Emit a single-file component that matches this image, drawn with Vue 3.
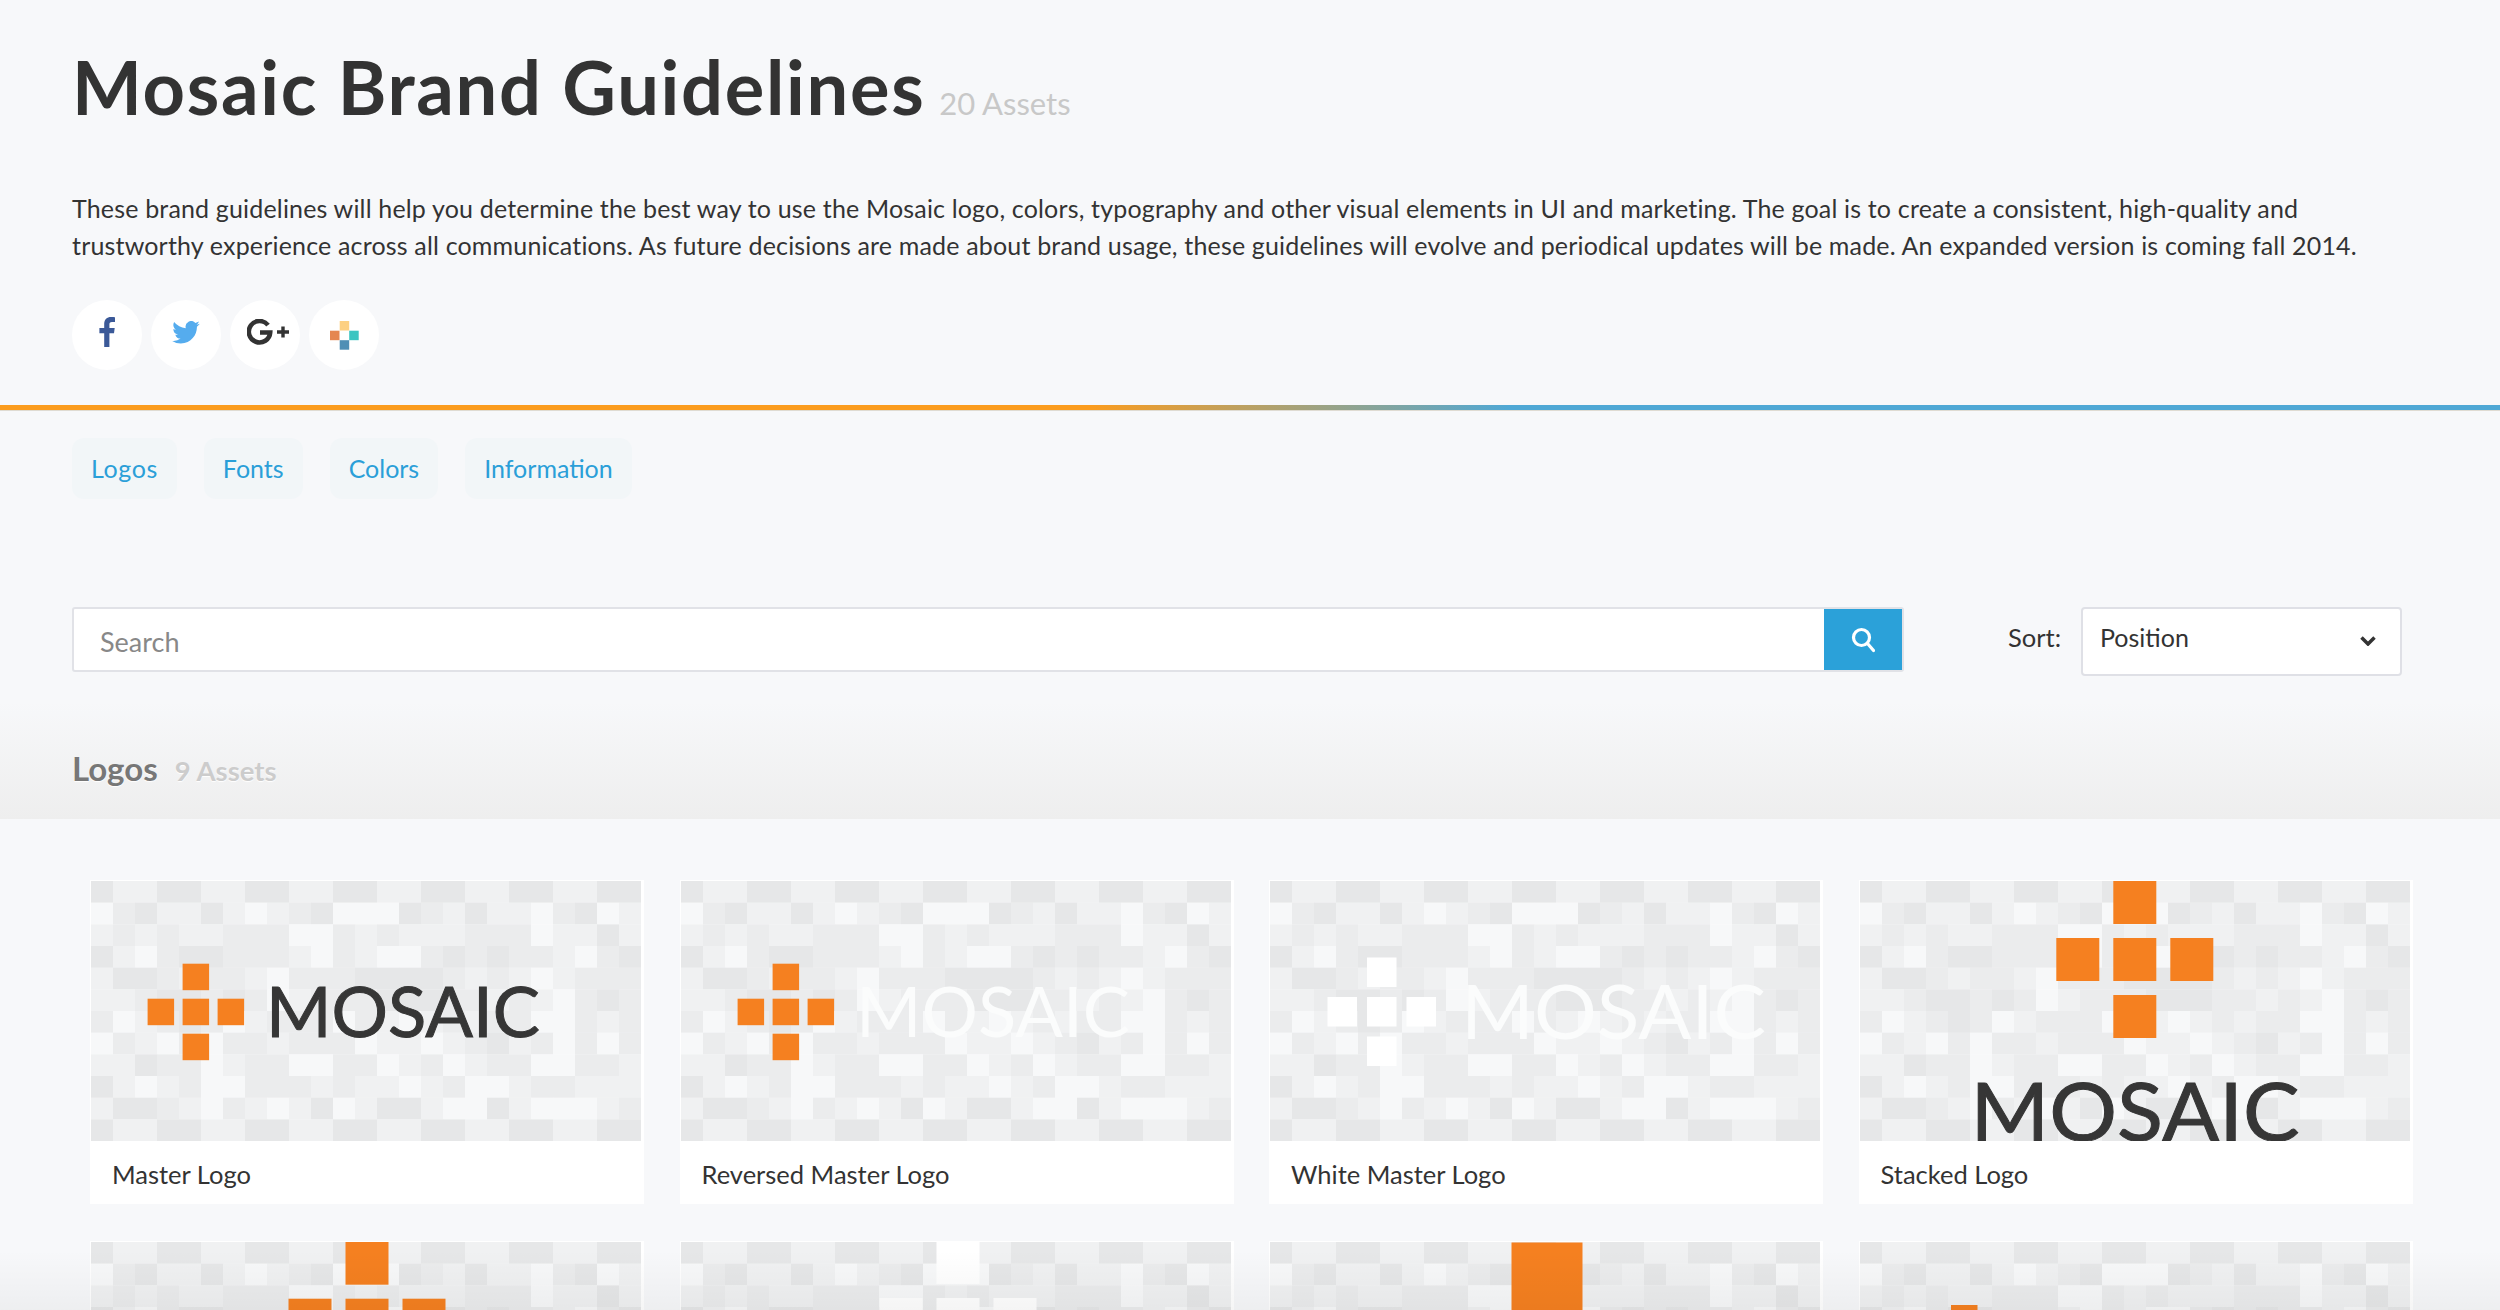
<script setup>
const rows = [
  '0220022002200220022002200',
  '3102202321033301202231032',
  '2121221113312122211132202',
  '0231001112312331010112310',
  '2001211231110000121232111',
  '2210010132111000112123101',
  '1321013211131232121133121',
  '3123131121113223210213131',
  '2201132113311321321133112',
  '0232133111212232133211222',
  '2001231232032002330233321',
  '0220022002200220022002200'
]
const shades = ['#e6e7e8', '#ebeced', '#f0f1f2', '#f7f8f9']
const cells = rows.flatMap((row, r) =>
  row.split('').map((v, c) => ({ x: c * 22, y: r * 21.67, fill: shades[+v] }))
)
const plus = (x, y, s, gap) => [
  [x, y - s - gap],
  [x - s - gap, y],
  [x, y],
  [x + s + gap, y],
  [x, y + s + gap]
].map(([px, py]) => ({ x: px, y: py, s }))

const ORANGE = '#f58020'
const DARK = '#363636'
const WHITE = '#ffffff'
const masterSquares = plus(91.6, 117.7, 26.5, 8.5)
const cards = [
  { id: 1, name: 'Master Logo', squares: masterSquares, color: ORANGE, word: { x: 175, y: 156, size: 69, width: 274, fill: DARK, stroke: DARK } },
  { id: 2, name: 'Reversed Master Logo', squares: masterSquares, color: ORANGE, word: { x: 175, y: 156, size: 69, width: 274, fill: '#fbfcfc', stroke: 'none' } },
  { id: 3, name: 'White Master Logo', squares: plus(97, 116, 29.5, 10), color: WHITE, word: { x: 191, y: 158, size: 76, width: 305, fill: '#fbfcfc', stroke: 'none' } },
  { id: 4, name: 'Stacked Logo', squares: plus(253.3, 57, 43, 14), color: ORANGE, word: { x: 110.6, y: 260, size: 82, width: 329, fill: DARK, stroke: DARK } },
  { id: 5, squares: plus(254.5, 56.7, 43, 14), color: ORANGE },
  { id: 6, squares: plus(255.5, 56, 43, 14), color: WHITE },
  { id: 7, squares: plus(241.5, 94.5, 71, 23), color: ORANGE },
  { id: 8, squares: plus(91, 98, 26.5, 8.5), color: ORANGE }
]
</script>

<template>
  <div class="page">
    <header class="head">
      <h1 class="title">Mosaic Brand Guidelines <small class="count">20 Assets</small></h1>
      <p class="intro">These brand guidelines will help you determine the best way to use the Mosaic logo, colors, typography and other visual elements in UI and marketing. The goal is to create a consistent, high-quality and<br>trustworthy experience across all communications. As future decisions are made about brand usage, these guidelines will evolve and periodical updates will be made. An expanded version is coming fall 2014.</p>
      <div class="social">
        <a class="circle">
          <svg class="up" width="16" height="30" viewBox="0 0 16 30"><path fill="#3b5998" d="M10.4 30V16.3h4.6l.7-5.4h-5.3V7.5c0-1.5.4-2.6 2.6-2.6H16V.2C15.5.1 13.9 0 12 0 8 0 5.2 2.5 5.2 7v3.900H.4v5.400h4.800V30z"/></svg>
        </a>
        <a class="circle">
          <svg class="up" width="28" height="23" viewBox="0 0 24 20"><path fill="#55acee" d="M24 2.400a9.800 9.800 0 0 1-2.800.8A4.900 4.900 0 0 0 23.300.5a9.800 9.800 0 0 1-3.100 1.200A4.900 4.900 0 0 0 11.800 6.200 14 14 0 0 1 1.700.9a4.900 4.900 0 0 0 1.500 6.600 4.900 4.900 0 0 1-2.200-.6v.1a4.900 4.900 0 0 0 3.900 4.800 4.900 4.900 0 0 1-2.200.1 4.900 4.900 0 0 0 4.600 3.400A9.900 9.900 0 0 1 0 17.300 14 14 0 0 0 7.500 19.500c9 0 14-7.500 14-14v-.6A10 10 0 0 0 24 2.400z"/></svg>
        </a>
        <a class="circle gplus">
          <svg class="up" width="42" height="26" viewBox="0 0 42 26"><path fill="none" stroke="#333" stroke-width="4.6" d="M21 6.200A10.700 10.700 0 1 0 23.200 13.500H13"/><path fill="none" stroke="#333" stroke-width="3.4" d="M30 13h12M36 7.500v11"/></svg>
        </a>
        <a class="circle">
          <svg width="29" height="29" viewBox="0 0 29 29"><rect x="9.7" y="0" width="9.5" height="9.5" fill="#fdd082"/><rect x="0" y="9.7" width="9.5" height="9.5" fill="#e58650"/><rect x="19.2" y="9.7" width="9.5" height="9.5" fill="#3cc5c1"/><rect x="9.7" y="19.2" width="9.5" height="9.5" fill="#4f8fb5"/></svg>
        </a>
      </div>
    </header>
    <div class="rule"></div>
    <nav class="tabs">
      <a class="tab">Logos</a>
      <a class="tab">Fonts</a>
      <a class="tab">Colors</a>
      <a class="tab">Information</a>
    </nav>
    <div class="tools">
      <div class="search">
        <div class="search-input">Search</div>
        <button class="search-btn">
          <svg width="24" height="26" viewBox="0 0 24 26"><circle cx="10.5" cy="10.5" r="8" fill="none" stroke="#fff" stroke-width="3.2"/><path d="M16.5 16.5l6 7" stroke="#fff" stroke-width="3.2" stroke-linecap="round"/></svg>
        </button>
      </div>
      <span class="sort-label">Sort:</span>
      <div class="select">
        <span>Position</span>
        <svg width="16" height="10" viewBox="0 0 16 10"><path d="M1.5 1.500L8 8l6.500-6.500" fill="none" stroke="#333" stroke-width="3.5"/></svg>
      </div>
    </div>
    <section class="band">
      <h2 class="band-title">Logos <small class="band-count">9 Assets</small></h2>
    </section>
    <div class="grid">
      <article v-for="card in cards" :key="card.id" class="card">
        <svg class="art" viewBox="0 0 550 260" width="550" height="260">
          <rect v-for="(cell, i) in cells" :key="i" :x="cell.x" :y="cell.y" width="22.2" height="21.87" :fill="cell.fill"/>
          <rect v-for="(sq, i) in card.squares" :key="'s' + i" :x="sq.x" :y="sq.y" :width="sq.s" :height="sq.s" :fill="card.color"/>
          <text v-if="card.word" :x="card.word.x" :y="card.word.y" :font-size="card.word.size" :fill="card.word.fill" :stroke="card.word.stroke" stroke-width="1" :textLength="card.word.width" lengthAdjust="spacingAndGlyphs" class="word">MOSAIC</text>
        </svg>
        <div v-if="card.name" class="label">{{ card.name }}</div>
      </article>
    </div>
    <div class="fade"></div>
  </div>
</template>

<style>
html, body { margin: 0; background: #f7f8fa; }
</style>

<style scoped>
.page {
  position: relative;
  width: 2500px;
  height: 1310px;
  overflow: hidden;
  background: #f7f8fa;
  font-family: Lato, "Open Sans", sans-serif;
  color: #333;
}
.head { padding: 39px 72px 0; height: 365px; box-sizing: border-box; }
.title {
  margin: 0;
  font-size: 74px;
  line-height: 96px;
  font-weight: 700;
  letter-spacing: 1.7px;
  color: #333;
}
.count { font-size: 31px; font-weight: 400; letter-spacing: 0; color: #c8c8c8; margin-left: -6px; }
.intro { margin: 39px 0 0; font-size: 25px; line-height: 37px; letter-spacing: .17px; color: #333; }
.social { display: flex; gap: 9px; margin-top: 36px; }
.circle {
  width: 70px; height: 70px; border-radius: 50%; background: #fff;
  display: flex; align-items: center; justify-content: center;
}
.up { margin-bottom: 6px; }
.gplus svg { margin-left: 5px; }
.rule {
  height: 5px;
  background: linear-gradient(90deg, #fb9c1e 0, #fb9c1e 1090px, #4fa8d5 1510px, #4fa8d5 100%);
  box-shadow: 0 1px 0 rgba(200, 190, 170, .5);
  margin-top: 40px;
}
.tabs { display: flex; gap: 27px; padding: 28px 72px 0; }
.tab {
  height: 61px; line-height: 61px; padding: 0 19px; border-radius: 12px;
  background: #f2f6f8; color: #2b9fd8; font-size: 25px;
}
.tab:first-child { letter-spacing: .6px; }
.tools { display: flex; align-items: flex-start; padding: 108px 72px 0; }
.search {
  width: 1832px; height: 65px; box-sizing: border-box; display: flex;
  border: 2px solid #e1e2e7; border-radius: 3px; background: #fff;
}
.search-input { flex: 1; padding-left: 26px; font-size: 27px; line-height: 66px; color: #888; }
.search-btn {
  width: 78px; border: 0; padding: 0; background: #2ba1d9;
  display: flex; align-items: center; justify-content: center;
}
.sort-label { margin-left: 104px; font-size: 25.5px; line-height: 60px; color: #333; }
.select {
  margin-left: 20px; width: 321px; height: 69px; box-sizing: border-box;
  border: 2px solid #dfe0e6; border-radius: 4px; background: #fff;
  display: flex; justify-content: space-between; align-items: flex-start;
  padding: 0 24px 0 17px; font-size: 25px; line-height: 57px; color: #333;
}
.select svg { margin-top: 27px; }
.band {
  margin-top: 26px; height: 117px; box-sizing: border-box; padding: 46px 72px 0;
  background: linear-gradient(180deg, #f7f8fa 0, #eeeeee 100%);
}
.band-title { margin: 0; font-size: 33px; line-height: 40px; font-weight: 700; color: #777; text-shadow: 0 1px 1px #fff; }
.band-count { font-size: 27.5px; font-weight: 700; color: #ccc; margin-left: 9px; }
.grid {
  display: grid; grid-template-columns: repeat(4, 554px); column-gap: 35.5px; row-gap: 37px;
  padding: 61px 0 0 90px;
}
.card { width: 554px; height: 324px; background: #fff; padding-top: 1px; box-sizing: border-box; }
.art { display: block; margin-left: 1px; }
.word { font-family: Lato, sans-serif; font-weight: 400; }
.label { height: 63px; padding-left: 22px; font-size: 25.5px; line-height: 67px; color: #333; }
.fade {
  position: absolute; left: 0; right: 0; bottom: 0; height: 60px; pointer-events: none;
  background: linear-gradient(180deg, rgba(0, 0, 0, 0), rgba(0, 0, 0, .04));
}
</style>
